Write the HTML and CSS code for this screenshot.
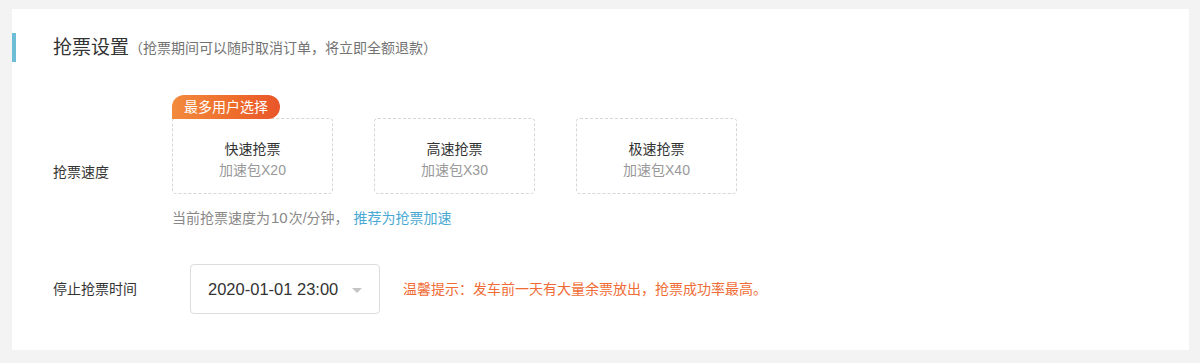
FILE: index.html
```html
<!DOCTYPE html>
<html lang="zh-CN">
<head>
<meta charset="utf-8">
<title>抢票设置</title>
<link rel="stylesheet" href="styles.css">
</head>
<body>
<div class="panel">
  <div class="head">
    <span class="title">抢票设置</span><span class="sub">（抢票期间可以随时取消订单，将立即全额退款）</span>
  </div>
  <div class="row speed">
    <div class="label speed-label">抢票速度</div>
    <div class="speed-body">
      <div class="options">
        <div class="option">
          <span class="badge">最多用户选择</span>
          <div class="opt-name">快速抢票</div>
          <div class="opt-desc">加速包X20</div>
        </div>
        <div class="option">
          <div class="opt-name">高速抢票</div>
          <div class="opt-desc">加速包X30</div>
        </div>
        <div class="option">
          <div class="opt-name">极速抢票</div>
          <div class="opt-desc">加速包X40</div>
        </div>
      </div>
      <div class="hint">当前抢票速度为<span class="num">10</span>次/分钟，<a class="link" href="#">推荐为抢票加速</a></div>
    </div>
  </div>
  <div class="row stop">
    <div class="label stop-label">停止抢票时间</div>
    <div class="select">
      <span class="select-value">2020-01-01 23:00</span>
      <span class="caret"></span>
    </div>
    <div class="tip">温馨提示：发车前一天有大量余票放出，抢票成功率最高。</div>
  </div>
</div>
</body>
</html>
```

FILE: styles.css
```css
html, body {
  margin: 0;
  padding: 0;
  background: #f3f3f3;
}
body {
  padding: 9px 11px 13px 12px;
  font-family: "Liberation Sans", "Noto Sans CJK SC", sans-serif;
  color: #333;
}
.panel {
  background: #fff;
  height: 341px;
  box-sizing: border-box;
  padding-top: 24px;
}
.head {
  display: flex;
  align-items: center;
  height: 29px;
  border-left: 4px solid #6dbdd6;
  padding-left: 37px;
}
.title {
  font-size: 19px;
  color: #333;
  line-height: 29px;
}
.sub {
  font-size: 14px;
  color: #737373;
  line-height: 29px;
  margin-top: 1px;
}
.row {
  display: flex;
  padding-left: 41px;
}
.label {
  font-size: 14px;
  line-height: 20px;
  color: #333;
}
.speed {
  margin-top: 56px;
  align-items: flex-start;
}
.speed-label {
  width: 119px;
  margin-top: 44px;
}
.options {
  display: flex;
  gap: 41px;
}
.option {
  position: relative;
  width: 161px;
  height: 76px;
  box-sizing: border-box;
  border: 1px dashed #d6d6d6;
  border-radius: 4px;
  padding-top: 20px;
  text-align: center;
  font-size: 14px;
  line-height: 21px;
}
.opt-name {
  color: #333;
}
.opt-desc {
  color: #999;
}
.badge {
  position: absolute;
  left: -1px;
  top: -24px;
  height: 24px;
  line-height: 24px;
  padding: 0 12px;
  font-size: 14px;
  color: #fff;
  white-space: nowrap;
  border-radius: 12px 12px 12px 0;
  background: linear-gradient(90deg, #f28a3c 0%, #ee6b2c 60%, #e9562a 100%);
}
.hint {
  margin-top: 14px;
  font-size: 14px;
  line-height: 20px;
  color: #888;
}
.num {
  font-size: 15px;
  margin: 0 1px;
}
.link {
  color: #4aa9d3;
  text-decoration: none;
  margin-left: 5px;
}
.stop {
  margin-top: 36px;
  align-items: center;
}
.stop-label {
  width: 137px;
}
.select {
  width: 190px;
  height: 50px;
  box-sizing: border-box;
  border: 1px solid #dcdcdc;
  border-radius: 4px;
  display: flex;
  align-items: center;
  padding-left: 17px;
  padding-right: 17px;
  justify-content: space-between;
}
.select-value {
  font-size: 16.5px;
  color: #333;
}
.caret {
  width: 0;
  height: 0;
  border-left: 5px solid transparent;
  border-right: 5px solid transparent;
  border-top: 5px solid #c4c4c4;
  margin-top: 2px;
}
.tip {
  margin-left: 23px;
  font-size: 14px;
  line-height: 20px;
  color: #f06c36;
}
```
